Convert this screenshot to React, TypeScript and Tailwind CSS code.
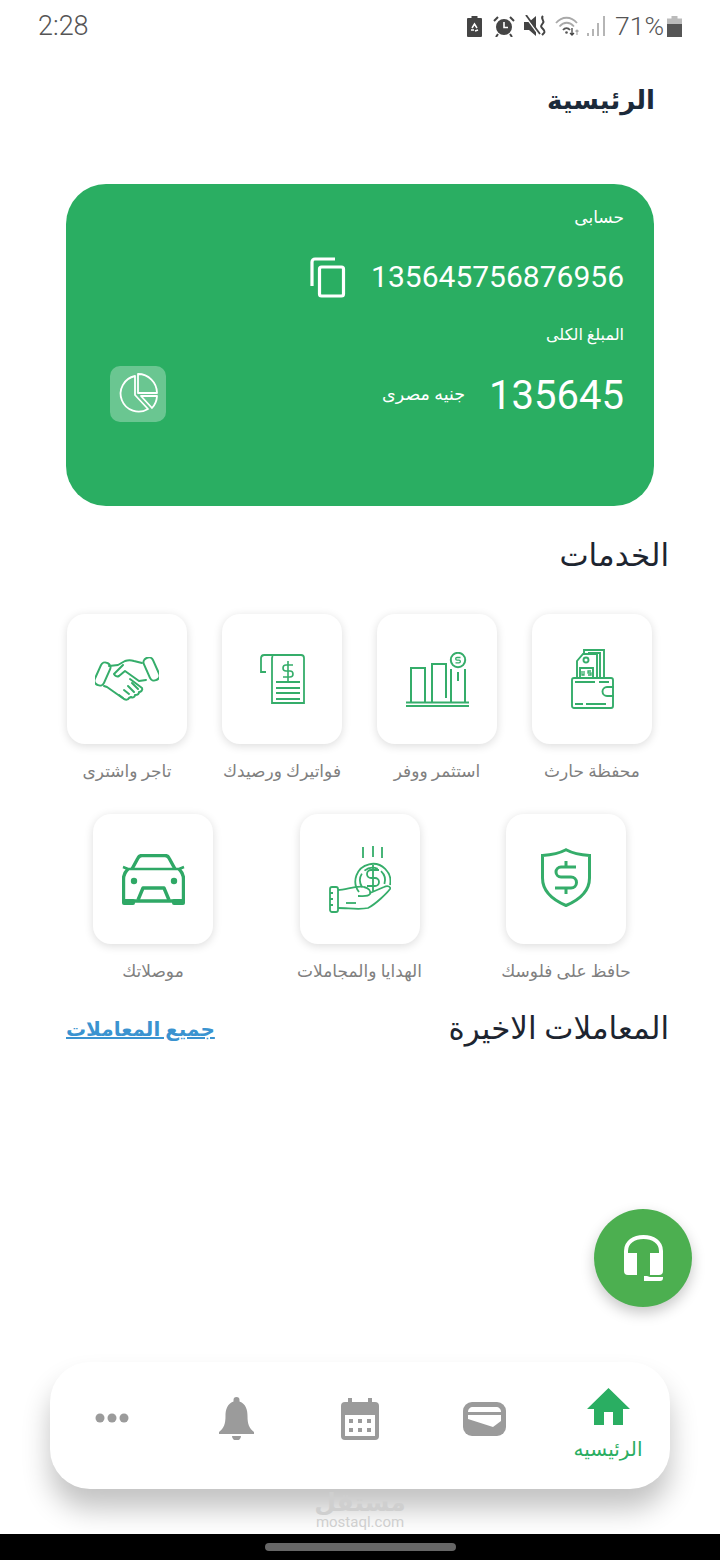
import React from "react";

const G = "#35ad6a";

function Wallet() {
  return (
    <svg width="44" height="60" viewBox="0 0 44 60" fill="none" stroke={G} strokeWidth="1.900" className="ml-[2px]">
      <rect x="1" y="29" width="41" height="30" rx="2" />
      <path d="M43 38h-7a4.500 4.500 0 0 0 0 9h7" />
      <path d="M4 33h20M28 33h10M4 55h8M15 55h20" />
      <path d="M13 4V1h20v28M17 4h12v25" />
      <path d="M6 29V12l6-7h14v24" />
      <path d="M9 29V19h13v10" />
      <circle cx="15" cy="11" r="2.500" />
      <path d="M11 22v4h2v-4M20 22h-3v2h3v2h-3" strokeWidth="1.300" />
    </svg>
  );
}
function Bars() {
  return (
    <svg width="63" height="55" viewBox="0 0 63 55" fill="none" stroke={G} strokeWidth="2">
      <path d="M5 50V16h14v34M26 50V12h14v34M45 50V17M59 50V17" />
      <path d="M0 50.500h63M0 54h63" />
      <circle cx="52" cy="8" r="7.200" />
      <path d="M54.500 5.500h-3.500a1.300 1.300 0 0 0 0 2.700h2a1.300 1.300 0 0 1 0 2.700h-3.500" strokeWidth="1.300" />
      <path d="M52 20v9" />
    </svg>
  );
}
function Receipt() {
  return (
    <svg width="45" height="50" viewBox="0 0 45 50" fill="none" stroke={G} strokeWidth="1.800">
      <path d="M4 1h37a3 3 0 0 1 3 3v45H12V4A3.300 3.300 0 0 0 5.500 1" />
      <path d="M6 18H1V4A3.300 3.300 0 0 1 4 1" />
      <path d="M33 11h-7a3 3 0 0 0 0 6h4a3 3 0 0 1 0 6h-7M28 7v20" strokeWidth="1.600" />
      <path d="M16 28h24M16 34h24M16 39h24M16 45h24" />
    </svg>
  );
}
function Handshake() {
  return (
    <svg width="64" height="44" viewBox="0 0 64 44" fill="none" stroke={G} strokeWidth="2" strokeLinejoin="round" strokeLinecap="round">
      <rect x="-5" y="-12" width="10" height="24" rx="4.500" transform="translate(7.500 17) rotate(24)" />
      <rect x="-5" y="-12" width="10" height="24" rx="4.500" transform="translate(56.500 12) rotate(-24)" />
      <path d="M14 9l9-1 7-4c3-1 6-1 9 0l8 2" />
      <path d="M51 23l-7 1-14-10-6 5c-2 1-4 0-5-2l9-9" />
      <path d="M9 29l3 1 17 12c2 1 4 1 5-1l2-1c2 1 4 0 4-2 2 0 4-1 4-3 2 0 4-2 3-4l-12-9" />
      <path d="M29 33l5 4M33 29l6 6M37 26l6 6M24 38l4 3" />
    </svg>
  );
}
function HandCoin() {
  return (
    <svg width="62" height="68" viewBox="0 0 62 68" fill="none" stroke={G} strokeWidth="1.800" strokeLinejoin="round">
      <path d="M34 2v11M44 1v11M53 2v11" />
      <path d="M30 47a17.500 17.500 0 1 1 31-7" />
      <path d="M33 42a12.500 12.500 0 1 1 21 0" strokeDasharray="14 4" />
      <path d="M50 25h-8a4 4 0 0 0 0 8h4a4 4 0 0 1 0 8h-8M44 20v26" />
      <path d="M9 45c8 0 18-5 26-3 5 1 7 4 6 7-2 3-7 2-12 2" />
      <path d="M41 48l14-6c4-2 7 0 6 2-3 4-14 15-22 19-8 2-20 0-30 0" />
      <path d="M17 58h10" />
      <rect x="1" y="42" width="8" height="25" rx="2" />
      <path d="M1 48h3M1 54h3M1 60h3" />
    </svg>
  );
}
function Car() {
  return (
    <svg width="63" height="51" viewBox="0 0 63 51" fill="none" stroke="#2fa866" strokeWidth="3.400" strokeLinejoin="round">
      <path d="M10 15l6-11c1-2 2-2.500 4-2.500h23c2 0 3 .5 4 2.500l6 11" />
      <path d="M1 13l5 2h51l5-2" strokeWidth="2.500" />
      <path d="M6 15c-3 3-4.500 6-4.500 10v22h60V25c0-4-1.500-7-4.500-10" />
      <path d="M16 46l5-12h21l5 12" />
      <circle cx="12" cy="27" r="3.200" fill="#2fa866" stroke="none" />
      <circle cx="52" cy="27" r="3.200" fill="#2fa866" stroke="none" />
      <rect x="0" y="45" width="13" height="6" rx="2" fill="#2fa866" stroke="none" />
      <rect x="50" y="45" width="13" height="6" rx="2" fill="#2fa866" stroke="none" />
    </svg>
  );
}
function Shield() {
  return (
    <svg width="50" height="59" viewBox="0 0 50 59" fill="none" stroke={G} strokeWidth="3" className="mb-[3px]">
      <path d="M25 1.800C31 5 40 7 48.500 7.500V30C48.500 44 38 52 25 57.500 12 52 1.500 44 1.500 30V7.500C10 7 19 5 25 1.800Z" />
      <path d="M35 19H20a5 5 0 0 0 0 10h10a5.500 5.500 0 0 1 0 11H14M25 13v6M25 40v6" />
    </svg>
  );
}
function Copy() {
  return (
    <svg width="36" height="41" viewBox="0 0 36 41" fill="none" stroke="#fff" strokeWidth="3.200" strokeLinejoin="round">
      <path d="M2 29V5a3 3 0 0 1 3-3h20" />
      <rect x="9.500" y="10" width="24" height="29" rx="2" />
    </svg>
  );
}
function Pie() {
  return (
    <svg width="42" height="42" viewBox="0 0 42 42" fill="none" stroke="#fff" strokeWidth="1.800" strokeLinejoin="round">
      <path d="M18 3a18 18 0 1 0 13 33L18 22Z" />
      <path d="M21 1a19 19 0 0 1 19 19H21Z" />
      <path d="M24 23h16a19 19 0 0 1-5 12Z" />
    </svg>
  );
}
function Headset() {
  return (
    <svg width="39" height="47" viewBox="0 0 39 47" fill="none">
      <path d="M2 26V16C2 7 10 2 19.500 2S37 7 37 16V26" stroke="#fff" strokeWidth="4" />
      <path d="M0 18h13v22H4a4 4 0 0 1-4-4ZM26 18h13v18a4 4 0 0 1-4 4h-9Z" fill="#fff" />
      <path d="M20 41h3l3 1h13v1a3 3 0 0 1-3 3H20Z" fill="#fff" />
    </svg>
  );
}
function Home() {
  return (
    <svg width="43" height="37" viewBox="0 0 43 37" fill="#2aae62">
      <path d="M21.500 0 43 21H36V37H26V24H17V37H7V21H0Z" />
    </svg>
  );
}
function WalletNav() {
  return (
    <svg width="43" height="34" viewBox="0 0 43 34">
      <rect width="43" height="34" rx="9" fill="#9b9b9b" />
      <path d="M5 10c0-3 2-5 5-5h23c3 0 5 2 5 5H5Z" fill="#fff" />
      <path d="M5 13h33v6l-8 6L5 17Z" fill="#fff" />
    </svg>
  );
}
function Calendar() {
  return (
    <svg width="38" height="42" viewBox="0 0 38 42">
      <rect y="4" width="38" height="38" rx="4" fill="#9b9b9b" />
      <rect x="7" width="4" height="8" fill="#9b9b9b" />
      <rect x="27" width="4" height="8" fill="#9b9b9b" />
      <rect x="4" y="17" width="30" height="21" fill="#fff" />
      <g fill="#9b9b9b">
        <rect x="8" y="21" width="4" height="4" />
        <rect x="17" y="21" width="4" height="4" />
        <rect x="26" y="21" width="4" height="4" />
        <rect x="8" y="30" width="4" height="4" />
        <rect x="17" y="30" width="4" height="4" />
        <rect x="26" y="30" width="4" height="4" />
      </g>
    </svg>
  );
}
function Bell() {
  return (
    <svg width="35" height="43" viewBox="0 0 35 43" fill="#9b9b9b">
      <path d="M17.500 0a3 3 0 0 1 3 3v1.500C27 7 28.500 13 28.500 19c0 8 1.500 12 6.500 16v2H0v-2c5-4 6.500-8 6.500-16C6.500 13 8 7 14.500 4.500V3a3 3 0 0 1 3-3Z" />
      <path d="M13 39h9a4.500 4.500 0 0 1-9 0Z" />
    </svg>
  );
}
function Dots() {
  return (
    <svg width="34" height="10" viewBox="0 0 34 10" fill="#9b9b9b" className="mb-[2px]">
      <circle cx="5" cy="5" r="4.500" />
      <circle cx="17" cy="5" r="4.500" />
      <circle cx="29" cy="5" r="4.500" />
    </svg>
  );
}
function StatusIcons() {
  return (
    <div className="flex items-center">
      <svg width="15" height="21" viewBox="0 0 15 21" fill="#444" className="mr-[11px]">
        <path d="M4.500 0h6v2H14a1 1 0 0 1 1 1v17a1 1 0 0 1-1 1H1a1 1 0 0 1-1-1V3a1 1 0 0 1 1-1h3.500Z" />
        <path d="M5 12l2.500-4L10 12M4 14h3M8 15l3-1" stroke="#fff" strokeWidth="1.500" fill="none" />
      </svg>
      <svg width="22" height="22" viewBox="0 0 22 22" className="mr-[9px]">
        <circle cx="11" cy="12" r="8" fill="#444" />
        <path d="M11 7v5.500h4" stroke="#fff" strokeWidth="1.600" fill="none" />
        <path d="M1 6l4-4M21 6l-4-4M5 19l-2 3M17 19l2 3" stroke="#444" strokeWidth="2" fill="none" />
      </svg>
      <svg width="22" height="22" viewBox="0 0 22 22" className="mr-[9px]">
        <path d="M0 7h5l7-6v20l-7-6H0Z" fill="#444" />
        <path d="M1 1l14 19" stroke="#fff" strokeWidth="1.500" />
        <path d="M2 0l14 19" stroke="#444" strokeWidth="1.800" />
        <path d="M19 1c-3 3 2 4 0 7s-3 3 0 6 1 4-1 6" stroke="#444" strokeWidth="2" fill="none" />
      </svg>
      <svg width="26" height="22" viewBox="0 0 26 22" fill="none" className="mr-[6px]">
        <path d="M1 8c6-7 15-7 21 0M4.500 11.500c4.500-5 10-5 14.500 0" stroke="#a9a9a9" strokeWidth="1.800" />
        <path d="M8 15c2-2.500 5-2.500 7 0" stroke="#555" strokeWidth="1.800" />
        <circle cx="11.500" cy="17.500" r="1.300" fill="#555" />
        <path d="M17 13v7M15 18l2 2 2-2" stroke="#444" strokeWidth="1.300" />
        <path d="M22 20v-5M20.500 16.500 22 15l1.500 1.500" stroke="#aaa" strokeWidth="1.200" />
      </svg>
      <svg width="19" height="22" viewBox="0 0 19 22" fill="#b5b5b5" className="mr-[9px]">
        <rect x="0" y="18" width="2" height="3" />
        <rect x="5" y="14" width="2" height="7" />
        <rect x="10" y="8" width="2" height="13" />
        <rect x="16" y="1" width="2" height="20" />
      </svg>
      <span className="mr-[3px] text-[26.500px] leading-none font-light text-[#555]">71%</span>
      <svg width="15" height="21" viewBox="0 0 15 21">
        <path d="M4.500 0h6v2.500H15V9H0V2.500h4.500Z" fill="#bbb" />
        <rect y="8" width="15" height="13" fill="#555" />
      </svg>
    </div>
  );
}

const row1 = [
  { label: "محفظة حارث", icon: <Wallet /> },
  { label: "استثمر ووفر", icon: <Bars /> },
  { label: "فواتيرك ورصيدك", icon: <Receipt /> },
  { label: "تاجر واشترى", icon: <Handshake /> },
];
const row2 = [
  { label: "حافظ على فلوسك", icon: <Shield /> },
  { label: "الهدايا والمجاملات", icon: <HandCoin /> },
  { label: "موصلاتك", icon: <Car /> },
];

function Tile({ label, icon }: { label: string; icon: React.ReactNode }) {
  return (
    <div className="flex w-[120px] flex-col items-center">
      <div className="flex h-[130px] w-[120px] items-center justify-center rounded-[18px] bg-white shadow-[0_2px_10px_rgba(0,0,0,0.14)]">
        {icon}
      </div>
      <div className="flex h-[56px] items-center text-[17px] whitespace-nowrap text-[#808080]">{label}</div>
    </div>
  );
}

export default function App() {
  return (
    <div dir="rtl" className="relative flex h-[1560px] w-[720px] flex-col overflow-hidden bg-white font-['Roboto','DejaVu_Sans',sans-serif] text-[#1d2530]">
      <div dir="ltr" className="flex h-[52px] items-center justify-between pr-[38px] pl-[38px]">
        <span className="text-[27px] leading-none font-light text-[#555]">2:28</span>
        <StatusIcons />
      </div>

      <div className="flex h-[96px] items-center pr-[65px] text-[26px] font-bold text-[#1c2a3a]">الرئيسية</div>

      <div className="mx-[66px] mt-[36px] flex h-[322px] flex-col rounded-[40px] bg-[#2aae62] px-[30px] text-white">
        <div className="mt-[20px] flex h-[28px] items-center text-[17px]">حسابى</div>
        <div className="mt-[20px] flex h-[50px] items-center gap-[25px]">
          <span className="text-[30px] leading-none">135645756876956</span>
          <Copy />
        </div>
        <div className="mt-[19px] flex h-[28px] items-center text-[16px]">المبلغ الكلى</div>
        <div className="mt-[17px] flex h-[56px] items-center justify-between pl-[14px]">
          <div className="flex items-center gap-[24px]">
            <span className="pt-[4px] text-[40px] leading-none">135645</span>
            <span className="text-[17.500px]">جنيه مصرى</span>
          </div>
          <div className="flex h-[56px] w-[56px] items-center justify-center rounded-[10px] bg-white/30">
            <Pie />
          </div>
        </div>
      </div>

      <div className="mt-[26px] flex h-[48px] items-center pr-[51px] text-[31px]">الخدمات</div>

      <div className="mt-[34px] flex justify-between pr-[68px] pl-[67px]">
        {row1.map((t) => (
          <Tile key={t.label} {...t} />
        ))}
      </div>
      <div className="mt-[14px] flex justify-between pr-[94px] pl-[93px]">
        {row2.map((t) => (
          <Tile key={t.label} {...t} />
        ))}
      </div>

      <div className="mt-[5px] flex h-[48px] items-center justify-between pr-[51px] pl-[66px]">
        <span className="text-[31px]">المعاملات الاخيرة</span>
        <a className="text-[20px] font-bold text-[#3a93d0] underline">جميع المعاملات</a>
      </div>

      <div className="absolute top-[1209px] left-[594px] flex h-[98px] w-[98px] items-center justify-center rounded-full bg-[#4caf50] shadow-[0_6px_14px_rgba(0,0,0,0.22)]">
        <Headset />
      </div>

      <div dir="ltr" className="mx-[50px] mt-auto flex h-[127px] items-center rounded-[40px] bg-white shadow-[0_20px_28px_rgba(0,0,0,0.24)]">
        <div className="flex flex-1 justify-center pb-[14px]"><Dots /></div>
        <div className="flex flex-1 justify-center pb-[14px]"><Bell /></div>
        <div className="flex flex-1 justify-center pb-[14px]"><Calendar /></div>
        <div className="flex flex-1 justify-center pb-[14px]"><WalletNav /></div>
        <div className="flex flex-1 flex-col items-center">
          <Home />
          <span dir="rtl" className="mt-[11px] text-[20px] leading-[27px] text-[#2aae62]">الرئيسيه</span>
        </div>
      </div>

      <div className="flex h-[45px] flex-col items-center justify-end pb-[5px] text-[#cfcfcf]">
        <span className="text-[25px] leading-[27px] font-bold">مستقل</span>
        <span className="text-[15px] leading-[13px]">mostaql.com</span>
      </div>

      <div className="flex h-[26px] items-center justify-center bg-black">
        <div className="h-[8px] w-[191px] rounded-full bg-[#666]" />
      </div>
    </div>
  );
}
